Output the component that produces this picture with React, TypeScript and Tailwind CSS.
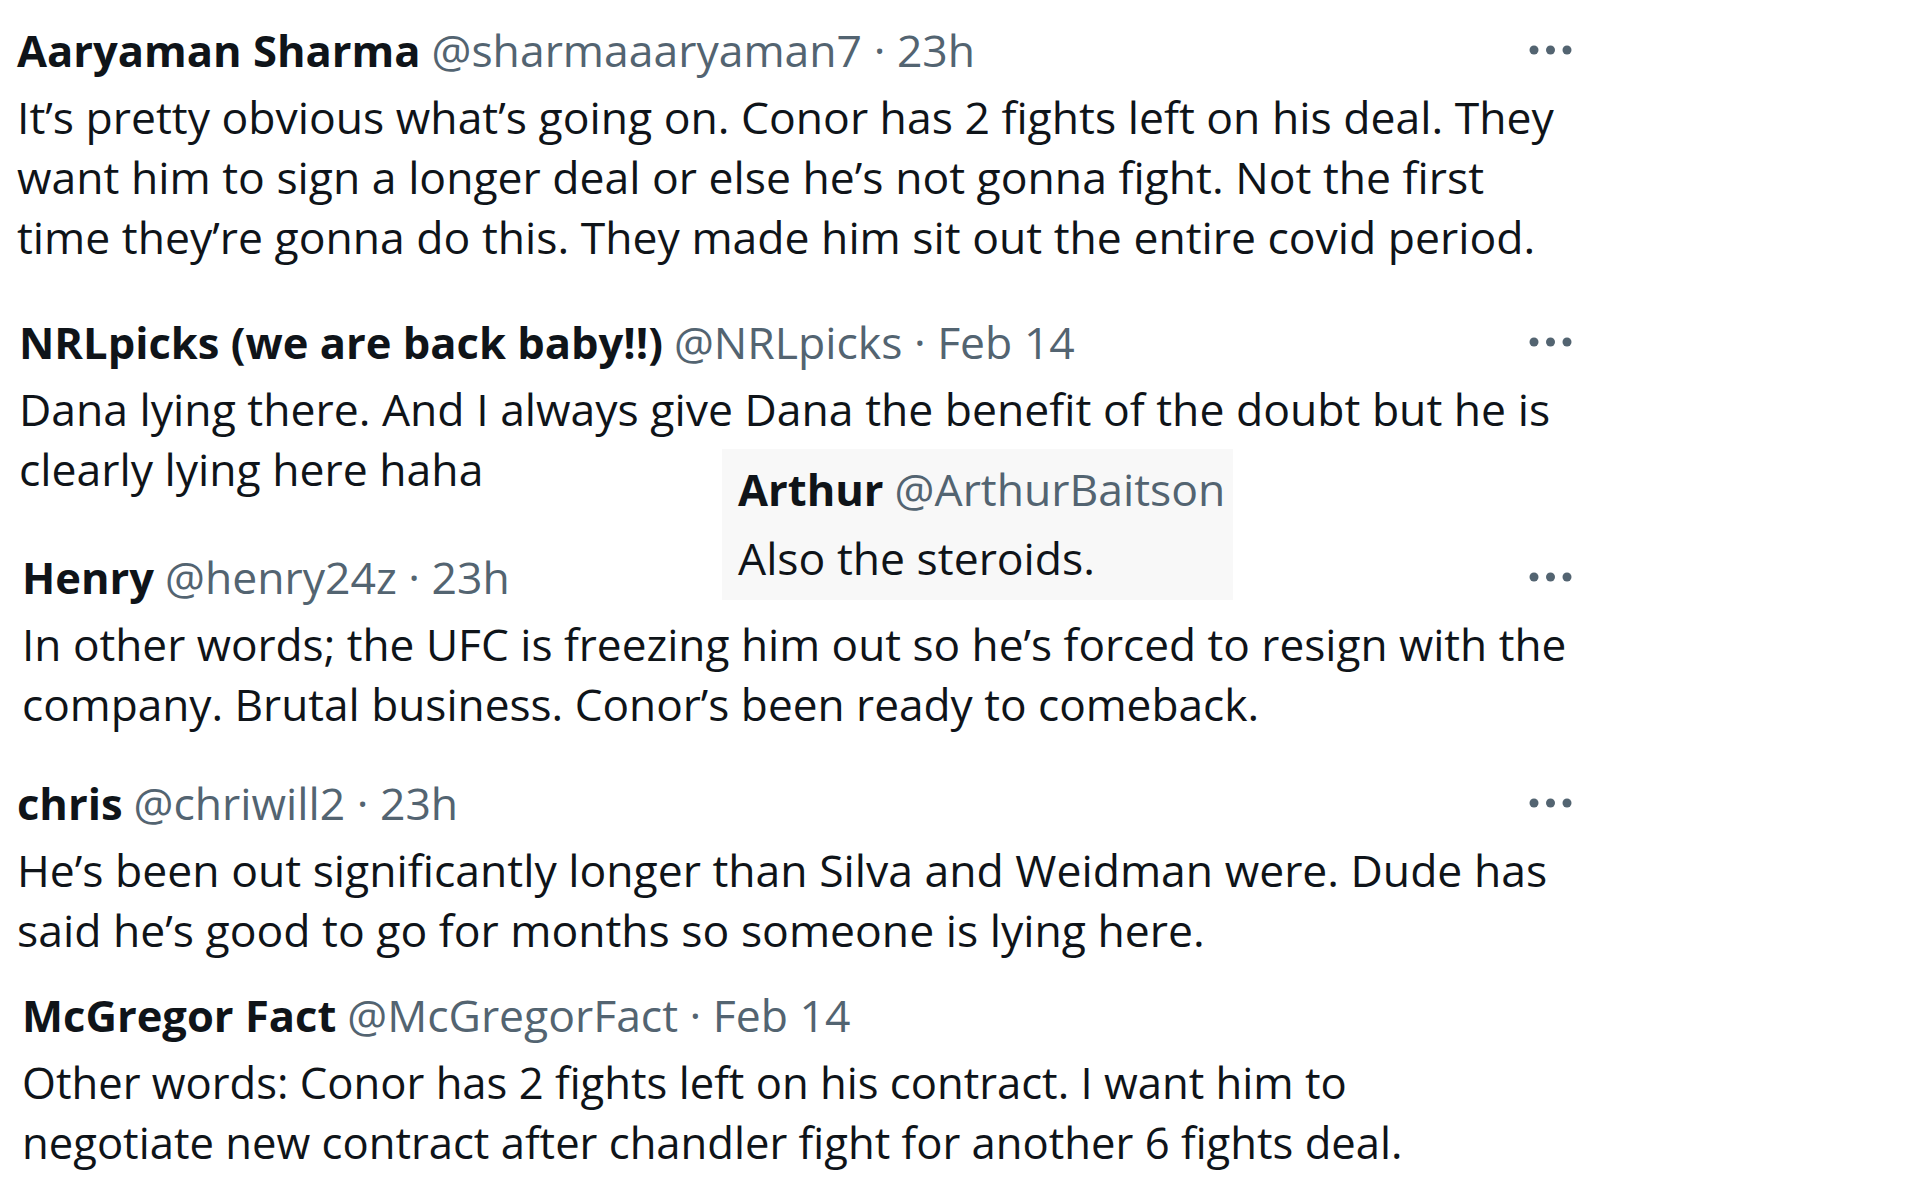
type Tweet = {
  name: string;
  handle: string;
  time?: string;
  lines: string[];
  wrap: string;
  body: string;
  dots: boolean;
};

const tweets: Tweet[] = [
  {
    name: "Aaryaman Sharma",
    handle: "@sharmaaaryaman7",
    time: "23h",
    lines: [
      "It\u2019s pretty obvious what\u2019s going on. Conor has 2 fights left on his deal. They",
      "want him to sign a longer deal or else he\u2019s not gonna fight. Not the first",
      "time they\u2019re gonna do this. They made him sit out the entire covid period.",
    ],
    wrap: "pl-[17px] pt-[20px]",
    body: "text-[44.5px]",
    dots: true,
  },
  {
    name: "NRLpicks (we are back baby!!)",
    handle: "@NRLpicks",
    time: "Feb 14",
    lines: [
      "Dana lying there. And I always give Dana the benefit of the doubt but he is",
      "clearly lying here haha",
    ],
    wrap: "pl-[19px] pt-[45px]",
    body: "text-[44.5px]",
    dots: true,
  },
  {
    name: "Henry",
    handle: "@henry24z",
    time: "23h",
    lines: [
      "In other words; the UFC is freezing him out so he\u2019s forced to resign with the",
      "company. Brutal business. Conor\u2019s been ready to comeback.",
    ],
    wrap: "pl-[22px] pt-[48px]",
    body: "text-[44.2px]",
    dots: true,
  },
  {
    name: "chris",
    handle: "@chriwill2",
    time: "23h",
    lines: [
      "He\u2019s been out significantly longer than Silva and Weidman were. Dude has",
      "said he\u2019s good to go for months so someone is lying here.",
    ],
    wrap: "pl-[17px] pt-[39px]",
    body: "text-[44.5px]",
    dots: true,
  },
  {
    name: "McGregor Fact",
    handle: "@McGregorFact",
    time: "Feb 14",
    lines: [
      "Other words: Conor has 2 fights left on his contract. I want him to",
      "negotiate new contract after chandler fight for another 6 fights deal.",
    ],
    wrap: "pl-[22px] pt-[25px]",
    body: "text-[43.6px]",
    dots: false,
  },
];

function MoreDots() {
  return (
    <svg width="48" height="12" viewBox="0 0 48 12" className="shrink-0">
      <circle cx="6" cy="6" r="4.5" fill="#536471" />
      <circle cx="22.5" cy="6" r="4.5" fill="#536471" />
      <circle cx="39" cy="6" r="4.5" fill="#536471" />
    </svg>
  );
}

function Header({ name, handle }: { name: string; handle: string }) {
  return (
    <div className="flex items-baseline gap-[11px] whitespace-nowrap leading-[60px]">
      <span className="text-[43.5px] font-bold text-[#0f1419]">{name}</span>
      <span className="text-[44.5px] text-[#536471]">{handle}</span>
    </div>
  );
}

function TweetRow({ t }: { t: Tweet }) {
  return (
    <div className={`w-[1576px] ${t.wrap}`}>
      <div className="flex h-[60px] items-center justify-between">
        <Header name={t.name} handle={t.time ? `${t.handle} \u00b7 ${t.time}` : t.handle} />
        {t.dots && <MoreDots />}
      </div>
      <div className={`mt-[7px] leading-[60px] text-[#0f1419] ${t.body}`}>
        {t.lines.map((l) => (
          <div key={l} className="whitespace-nowrap">
            {l}
          </div>
        ))}
      </div>
    </div>
  );
}

export default function App() {
  return (
    <div className="relative h-[1200px] w-[1920px] overflow-hidden bg-white font-['Open_Sans','Noto_Sans',sans-serif]">
      <div className="flex flex-col">
        {tweets.map((t) => (
          <TweetRow key={t.handle} t={t} />
        ))}
      </div>

      {/* pasted quote reply */}
      <div className="absolute left-[722px] top-[449px] h-[151px] w-[511px] bg-[#f8f8f8] px-[16px] pt-[10px]">
        <Header name="Arthur" handle="@ArthurBaitson" />
        <div className="mt-[8px] whitespace-nowrap text-[44.5px] leading-[60px] text-[#0f1419]">
          Also the steroids.
        </div>
      </div>
    </div>
  );
}
